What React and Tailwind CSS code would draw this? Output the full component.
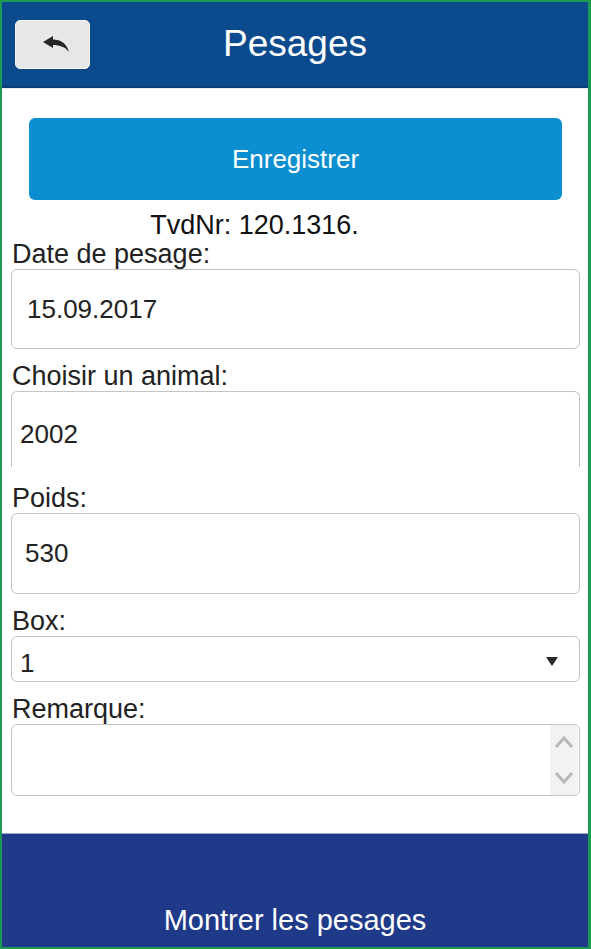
import React from "react";

export default function App() {
  const font = { fontFamily: '"Liberation Sans", Arial, sans-serif' };
  return (
    <div
      className="w-[591px] h-[949px] border-2 border-r-[3px] border-[#1a9a52] bg-white flex flex-col overflow-hidden"
      style={font}
    >
      {/* Header */}
      <div className="h-[86px] shrink-0 bg-[#0c4a8e] border-b-2 border-[#083d78] flex items-center relative">
        <button className="ml-[13px] w-[75px] h-[49px] rounded-[5px] bg-[#e7e7e7] border border-[#f4f4f4] flex items-center justify-center">
          <svg width="26" height="16" viewBox="0 0 26 16" className="ml-[6px]">
            <path
              d="M0 6 L10 0 L10 3.5 C18 3.5 24 8 26 16 C22 11 17 9 10 9 L10 12 Z"
              fill="#262626"
            />
          </svg>
        </button>
        <div className="absolute left-0 right-0 top-0 bottom-0 flex items-center justify-center pointer-events-none">
          <span className="text-white text-[37px] leading-none mt-[-2px]">Pesages</span>
        </div>
      </div>

      {/* Content */}
      <div className="flex-1 flex flex-col pl-[9px] pr-[8px] pt-[29px] border-t border-[#e4eef5]">
        <div className="mx-[18px] h-[82px] rounded-[6px] bg-[#0b8fd0] flex items-center justify-center">
          <span className="text-white text-[26px]">Enregistrer</span>
        </div>
        <div className="mt-[10px] h-[30px] leading-[30px] text-center text-[27px] text-[#111] pr-[82px]">
          TvdNr: 120.1316.
        </div>

        <div className="h-[29px] leading-[29px] text-[27px] text-[#222] pl-[1px]">Date de pesage:</div>
        <div className="h-[80px] rounded-[6px] border border-[#c4c4c4] flex items-center pl-[15px] text-[26px] text-[#222]">
          15.09.2017
        </div>

        <div className="mt-[13px] h-[29px] leading-[29px] text-[27px] text-[#222] pl-[1px]">Choisir un animal:</div>
        <div className="h-[76px] rounded-t-[6px] border border-b-0 border-[#c4c4c4] flex items-center pl-[8px] pt-[10px] text-[26px] text-[#222]">
          2002
        </div>

        <div className="mt-[17px] h-[29px] leading-[29px] text-[27px] text-[#222] pl-[1px]">Poids:</div>
        <div className="h-[81px] rounded-[6px] border border-[#c4c4c4] flex items-center pl-[13px] text-[26px] text-[#222]">
          530
        </div>

        <div className="mt-[13px] h-[29px] leading-[29px] text-[27px] text-[#222] pl-[1px]">Box:</div>
        <div className="h-[46px] rounded-[6px] border border-[#c4c4c4] flex items-center justify-between pl-[8px] pr-[21px] pt-[8px] text-[26px] text-[#222]">
          <span>1</span>
          <svg width="12" height="9" viewBox="0 0 12 9" className="mb-[4px]">
            <path d="M0 0 L12 0 L6 9 Z" fill="#2a2a2a" />
          </svg>
        </div>

        <div className="mt-[13px] h-[29px] leading-[29px] text-[27px] text-[#222] pl-[1px]">Remarque:</div>
        <div className="h-[72px] rounded-[6px] border border-[#c4c4c4] flex justify-end overflow-hidden">
          <div className="w-[28px] bg-[#f2f2f2] flex flex-col items-center justify-between py-[10px] mr-[1px]">
            <svg width="20" height="14" viewBox="0 0 20 14">
              <path d="M2 12 L10 3 L18 12" fill="none" stroke="#b8b8b8" strokeWidth="3" />
            </svg>
            <svg width="20" height="14" viewBox="0 0 20 14">
              <path d="M2 2 L10 11 L18 2" fill="none" stroke="#b8b8b8" strokeWidth="3" />
            </svg>
          </div>
        </div>
      </div>

      {/* Bottom bar */}
      <div className="h-[114px] shrink-0 bg-[#1f3a89] border-t border-[#9aa8c8] flex items-end justify-center pb-[12px]">
        <span className="text-white text-[29px] leading-[30px]">Montrer les pesages</span>
      </div>
    </div>
  );
}
